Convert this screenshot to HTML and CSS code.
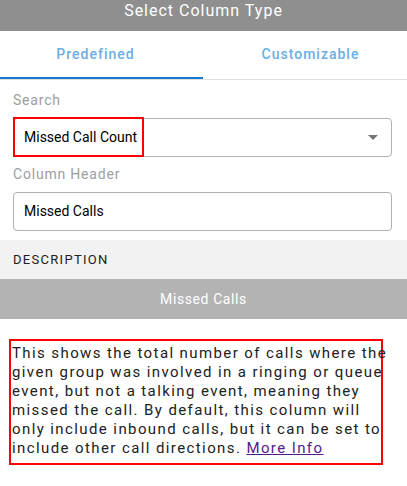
FILE: index.html
```html
<!DOCTYPE html>
<html>
<head>
<meta charset="utf-8">
<link rel="stylesheet" href="styles.css">
</head>
<body>
<div class="dialog">
  <div class="title">Select Column Type</div>
  <div class="tabs">
    <div class="tab tab-active">Predefined</div>
    <div class="tab tab-second">Customizable</div>
  </div>
  <div class="content">
    <div class="label">Search</div>
    <div class="field select">
      <span class="highlight">Missed Call Count</span>
      <svg class="arrow" width="10" height="5" viewBox="0 0 10 5"><path d="M0 0 L10 0 L5 5 Z" fill="#757575"/></svg>
    </div>
    <div class="label label-second">Column Header</div>
    <div class="field">Missed Calls</div>
  </div>
  <div class="desc-head">DESCRIPTION</div>
  <div class="desc-name">Missed Calls</div>
  <div class="desc-box">
    <p class="desc-text">This shows the total number of calls where the given group was involved in a ringing or queue event, but not a talking event, meaning they missed the call. By default, this column will only include inbound calls, but it can be set to include other call directions. <a href="#" class="more">More Info</a></p>
  </div>
</div>
</body>
</html>
```

FILE: styles.css
```css
html, body {
  margin: 0;
  padding: 0;
  background: #ffffff;
}
body {
  font-family: Roboto, "Liberation Sans", sans-serif;
  width: 407px;
  height: 486px;
  overflow: hidden;
}
.dialog {
  display: flex;
  flex-direction: column;
}
.title {
  height: 31px;
  background: #8f8f8f;
  color: #ffffff;
  font-size: 16px;
  letter-spacing: 1px;
  line-height: 22px;
  text-align: center;
}
.tabs {
  display: flex;
  border-bottom: 1px solid #e0e0e0;
}
.tab {
  height: 48px;
  box-sizing: border-box;
  line-height: 46px;
  font-size: 14px;
  font-weight: 500;
  letter-spacing: 1px;
  color: #6aaee6;
  text-align: center;
}
.tab-active {
  width: 203px;
  border-bottom: 2px solid #1976d2;
  padding-right: 12px;
}
.tab-second {
  flex: 1;
  padding-left: 11px;
}
.content {
  padding: 10px 15px 0 13px;
  display: flex;
  flex-direction: column;
}
.label {
  font-size: 14px;
  line-height: 20px;
  color: #9e9e9e;
  letter-spacing: 0.8px;
  margin-bottom: 8px;
}
.label-second {
  margin-top: 7px;
}
.field {
  position: relative;
  height: 39px;
  box-sizing: border-box;
  border: 1px solid #b0b0b0;
  border-radius: 4px;
  padding-left: 10px;
  font-size: 14px;
  line-height: 37px;
  color: #000000;
}
.select {
  display: flex;
  align-items: center;
  justify-content: space-between;
  padding-right: 13px;
}
.highlight {
  position: absolute;
  left: -1px;
  top: -2px;
  width: 131px;
  height: 40px;
  box-sizing: border-box;
  border: 2px solid #ff0000;
  padding-left: 9px;
  line-height: 36px;
}
.arrow {
  margin-left: auto;
}
.desc-head {
  margin-top: 9px;
  height: 39px;
  background: #f2f2f2;
  padding-left: 13px;
  font-size: 13px;
  letter-spacing: 1.3px;
  line-height: 40px;
  color: #212121;
}
.desc-name {
  height: 40px;
  background: #b3b3b3;
  color: #ffffff;
  text-align: center;
  font-size: 14px;
  letter-spacing: 0.6px;
  line-height: 40px;
}
.desc-box {
  margin: 20px 0 0 9px;
  width: 374px;
  height: 126px;
  box-sizing: border-box;
  border: 2px solid #ff0000;
  padding: 3px 0 0 1px;
}
.desc-text {
  margin: 0;
  width: 382px;
  font-size: 15px;
  line-height: 19px;
  letter-spacing: 1.4px;
  color: #212121;
}
.more {
  color: #551a8b;
  text-decoration: underline;
}
```
